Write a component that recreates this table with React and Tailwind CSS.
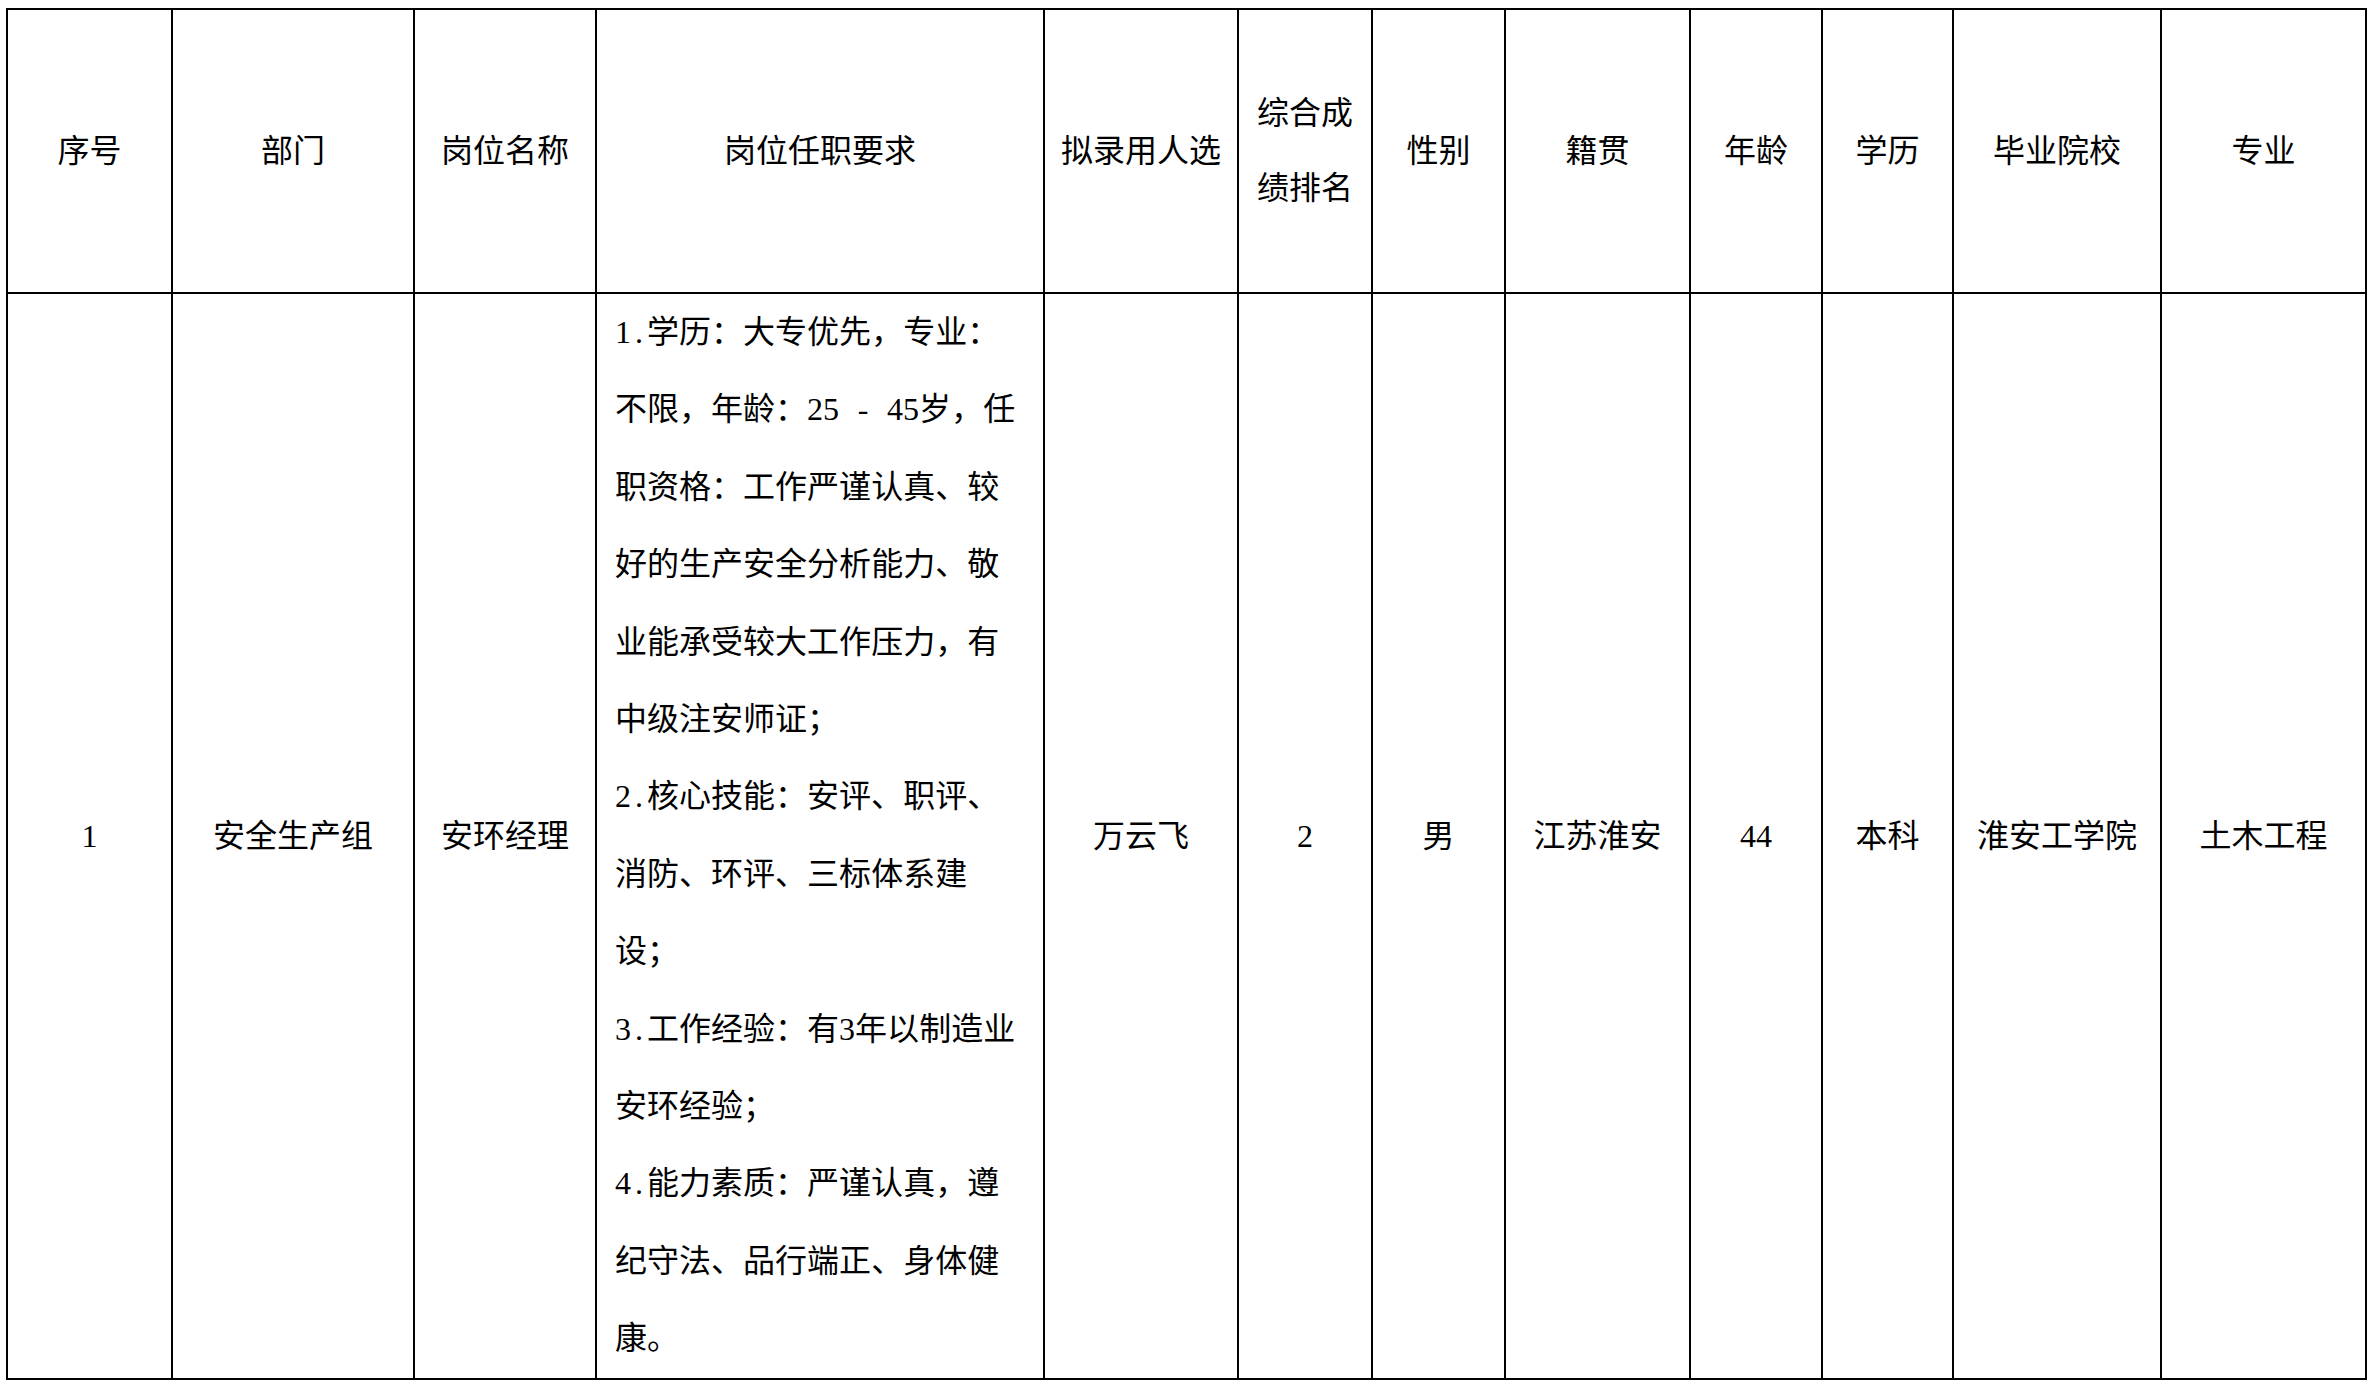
const font = { fontFamily: '"Liberation Serif", "Noto Sans CJK SC", serif' };

const headers = ['序号', '部门', '岗位名称', '岗位任职要求', '拟录用人选', null, '性别', '籍贯', '年龄', '学历', '毕业院校', '专业'];

const requirementLines = [
  '1.学历：大专优先，专业：',
  '不限，年龄：25 - 45岁，任',
  '职资格：工作严谨认真、较',
  '好的生产安全分析能力、敬',
  '业能承受较大工作压力，有',
  '中级注安师证；',
  '2.核心技能：安评、职评、',
  '消防、环评、三标体系建',
  '设；',
  '3.工作经验：有3年以制造业',
  '安环经验；',
  '4.能力素质：严谨认真，遵',
  '纪守法、品行端正、身体健',
  '康。',
];

const row = {
  id: '1',
  dept: '安全生产组',
  post: '安环经理',
  name: '万云飞',
  rank: '2',
  gender: '男',
  origin: '江苏淮安',
  age: '44',
  edu: '本科',
  school: '淮安工学院',
  major: '土木工程',
};

// the source document uses a font where latin chars are half an em wide
const renderLine = (line) =>
  line.split('').map((ch, i) =>
    /[\x20-\x7e]/.test(ch) ? (
      <span key={i} className="inline-block w-[16px] text-center whitespace-pre">{ch}</span>
    ) : (
      ch
    )
  );

function Cell({ children }) {
  return (
    <div className="flex items-center justify-center border-r-2 border-b-2 border-black text-center">
      {children}
    </div>
  );
}

export default function App() {
  return (
    <div className="min-h-screen bg-white text-black text-[32px]" style={font}>
      <div className="pt-[8px] pl-[6px]">
        <div className="grid w-max grid-cols-[165px_242px_182px_448px_194px_134px_133px_185px_132px_131px_208px_205px] border-t-2 border-l-2 border-black">
          {/* header */}
          {headers.map((h, i) => (
            <div key={i} className="h-[284px] flex items-center justify-center border-r-2 border-b-2 border-black text-center">
              {h === null ? (
                <div className="leading-[75px]">
                  综合成<br />绩排名
                </div>
              ) : (
                <span className="whitespace-nowrap">{h}</span>
              )}
            </div>
          ))}

          {/* body */}
          <Cell>{row.id}</Cell>
          <Cell>{row.dept}</Cell>
          <Cell>{row.post}</Cell>
          <div className="border-r-2 border-b-2 border-black pl-[18px] leading-[77.4px]">
            {requirementLines.map((line, i) => (
              <div key={i} className="whitespace-nowrap">{renderLine(line)}</div>
            ))}
          </div>
          <Cell>{row.name}</Cell>
          <Cell>{row.rank}</Cell>
          <Cell>{row.gender}</Cell>
          <Cell>{row.origin}</Cell>
          <Cell>{row.age}</Cell>
          <Cell>{row.edu}</Cell>
          <Cell>{row.school}</Cell>
          <Cell>{row.major}</Cell>
        </div>
      </div>
    </div>
  );
}
